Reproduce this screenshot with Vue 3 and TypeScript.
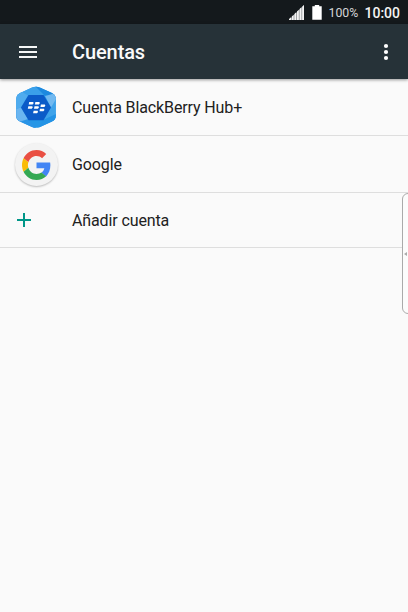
<script setup lang="ts">
type AccountKind = 'blackberry' | 'google' | 'add'

interface AccountRow {
  kind: AccountKind
  label: string
}

const rows: AccountRow[] = [
  { kind: 'blackberry', label: 'Cuenta BlackBerry Hub+' },
  { kind: 'google', label: 'Google' },
  { kind: 'add', label: 'Añadir cuenta' },
]
</script>

<template>
  <div class="screen">
    <div class="status">
      <svg class="signal" width="15" height="15" viewBox="0 0 15 15">
        <path d="M0 15L15 0V15Z" fill="#8d9193" />
        <path d="M0 15V14L2 12.200V15ZM2.800 15V11.500L4.600 9.800V15ZM5.400 15V9L7.200 7.300V15ZM8 15V6.500L9.800 4.800V15ZM10.600 15V4L12.400 2.300V15ZM13.200 15V1.700L15 0V15Z" fill="#f4f4f4" />
      </svg>
      <svg class="battery" width="10" height="15" viewBox="0 0 10 15">
        <path d="M2.800 0H7.200V1.300H9.700V14.700H.3V1.300H2.800Z" fill="#fff" />
      </svg>
      <span class="percent">100%</span>
      <span class="clock">10:00</span>
    </div>
    <header class="bar">
      <svg class="menu" width="18" height="14" viewBox="0 0 18 14">
        <path d="M0 2H18M0 7H18M0 12H18" stroke="#f4f6f6" stroke-width="2.200" />
      </svg>
      <h1 class="title">Cuentas</h1>
      <svg class="more" width="6" height="18" viewBox="0 0 6 18">
        <circle cx="3" cy="3" r="2.100" fill="#fff" />
        <circle cx="3" cy="9" r="2.100" fill="#fff" />
        <circle cx="3" cy="15" r="2.100" fill="#fff" />
      </svg>
    </header>
    <ul class="list">
      <li v-for="row in rows" :key="row.kind" class="row" :class="row.kind">
        <span class="icon">
          <svg v-if="row.kind === 'blackberry'" width="48" height="48" viewBox="0 0 48 48">
            <defs>
              <clipPath id="hub">
                <path d="M20 4.500Q24 2.800 28 4.500L40 10Q43.800 12 43.800 16V33Q43.800 36.500 40 38.500L28 44Q24 45.700 20 44L8 38.500Q4.200 36.500 4.200 33V16Q4.200 12 8 10Z" />
              </clipPath>
            </defs>
            <g clip-path="url(#hub)">
              <path d="M0 0H48V48H0Z" fill="#2596e6" />
              <path d="M4 12L24 2L34 12H17L9 25Z" fill="#3aa0ea" />
              <path d="M4 9L10 9L16 12.500L9 24.500L4 33Z" fill="#4fabee" />
              <path d="M22 2L44 11V15L32 12Z" fill="#1d89df" />
              <path d="M44 10V34L39 24.500L33 13Z" fill="#72b9f0" />
              <path d="M44 16V35L31 37L39 24.500Z" fill="#3fa3ea" />
              <path d="M44 31V38L26 46L31 37Z" fill="#2493e5" />
              <path d="M4 26L9 24.500L17 37L26 47L4 38Z" fill="#2a94e6" />
              <path d="M4 26L9 24.500L16 36L7 39L4 36Z" fill="#6ab5f0" />
            </g>
            <path d="M16.500 12H31.500L39 24.500L31.500 37.200H16.500L9 24.500Z" fill="#0b5bc8" />
            <g fill="#fff" transform="translate(0 .5)">
              <path d="M17.200 18.400H21.200Q22.400 19.600 20.600 20.900H16.700Z" />
              <path d="M23.400 18.400H27.400Q28.600 19.600 26.800 20.900H22.900Z" />
              <path d="M16.300 22.800H20.300Q21.500 24 19.700 25.300H15.800Z" />
              <path d="M22.500 22.800H26.500Q27.700 24 25.900 25.300H22Z" />
              <path d="M28.900 20.900H32.900Q34.100 22.100 32.300 23.400H28.400Z" />
              <path d="M28 25.200H32Q33.200 26.400 31.400 27.700H27.500Z" />
              <path d="M21.600 27.200H25.600Q26.800 28.400 25 29.700H21.100Z" />
            </g>
          </svg>
          <span v-else-if="row.kind === 'google'" class="disc">
            <svg width="29" height="30" viewBox="0 0 48 48" preserveAspectRatio="none">
              <path fill="#e94f43" d="M24 9.500c3.540 0 6.710 1.220 9.210 3.600l6.850-6.850C35.900 2.380 30.470 0 24 0 14.620 0 6.510 5.380 2.560 13.220l7.980 6.190C12.430 13.720 17.740 9.500 24 9.500z" />
              <path fill="#4285f4" d="M46.980 24.550c0-1.570-.15-3.090-.38-4.550H24v9.020h12.940c-.58 2.960-2.260 5.480-4.780 7.180l7.730 6c4.510-4.180 7.090-10.360 7.090-17.650z" />
              <path fill="#fbbc05" d="M10.530 28.590c-.48-1.450-.76-2.990-.76-4.590s.27-3.140.76-4.590l-7.980-6.190C.92 16.460 0 20.120 0 24c0 3.880.92 7.540 2.560 10.780l7.970-6.190z" />
              <path fill="#34a853" d="M24 48c6.480 0 11.930-2.130 15.890-5.810l-7.730-6c-2.150 1.450-4.920 2.300-8.160 2.300-6.260 0-11.570-4.220-13.470-9.910l-7.980 6.190C6.510 42.620 14.620 48 24 48z" />
            </svg>
          </span>
          <svg v-else width="14" height="14" viewBox="0 0 14 14">
            <path d="M7 0V14M0 7H14" stroke="#009688" stroke-width="2" />
          </svg>
        </span>
        <span class="label">{{ row.label }}</span>
      </li>
    </ul>
    <div class="edge">
      <svg width="3" height="4" viewBox="0 0 3 4"><path d="M3 0V4L0 2Z" fill="#aaa" /></svg>
    </div>
  </div>
</template>

<style>
body {
  margin: 0;
}
</style>

<style scoped>
.screen {
  position: relative;
  width: 408px;
  height: 612px;
  overflow: hidden;
  background: #fafafa;
  font-family: Roboto, "Liberation Sans", sans-serif;
  color: #212121;
}
.status {
  display: flex;
  align-items: center;
  justify-content: flex-end;
  box-sizing: border-box;
  height: 24px;
  padding-right: 8px;
  background: #14191c;
}
.signal {
  margin-right: 8px;
}
.percent {
  width: 30px;
  margin-left: 6px;
  padding-top: 1px;
  font-size: 12.3px;
  line-height: 16px;
  color: #d4d6d7;
  white-space: nowrap;
}
.clock {
  margin-left: 6px;
  font-size: 14px;
  line-height: 16px;
  padding-top: 1px;
  font-weight: 500;
  color: #f4f4f4;
}
.bar {
  display: flex;
  align-items: center;
  box-sizing: border-box;
  position: relative;
  height: 55px;
  padding: 0 19px;
  background: #263238;
  box-shadow: 0 1px 3px rgba(0, 0, 0, 0.4);
}
.title {
  flex: 1;
  margin: 1px 0 0 35px;
  font-size: 20px;
  line-height: 24px;
  font-weight: 500;
  letter-spacing: -0.1px;
  color: #fafafa;
}
.list {
  margin: 0;
  padding: 0;
  list-style: none;
}
.row {
  display: flex;
  align-items: center;
  box-sizing: border-box;
  height: 57px;
  border-bottom: 1px solid #dedede;
}
.add {
  height: 55px;
}
.icon {
  display: flex;
  align-items: center;
  justify-content: center;
  width: 72px;
}
.add .icon {
  width: 48px;
  margin-right: 24px;
}
.disc {
  display: flex;
  align-items: center;
  justify-content: center;
  box-sizing: border-box;
  width: 43px;
  height: 43px;
  padding-top: 1px;
  border-radius: 50%;
  background: #f3f3f3;
  box-shadow: 0 1px 2px rgba(0, 0, 0, 0.25);
}
.label {
  padding-top: 1px;
  font-size: 16px;
  line-height: 20px;
  letter-spacing: -0.12px;
}
.edge {
  position: absolute;
  top: 193px;
  right: -6px;
  display: flex;
  align-items: center;
  box-sizing: border-box;
  width: 12px;
  height: 121px;
  padding-left: 1px;
  border: 1px solid #aaa;
  border-radius: 6px;
  background: #fcfcfc;
}
</style>
